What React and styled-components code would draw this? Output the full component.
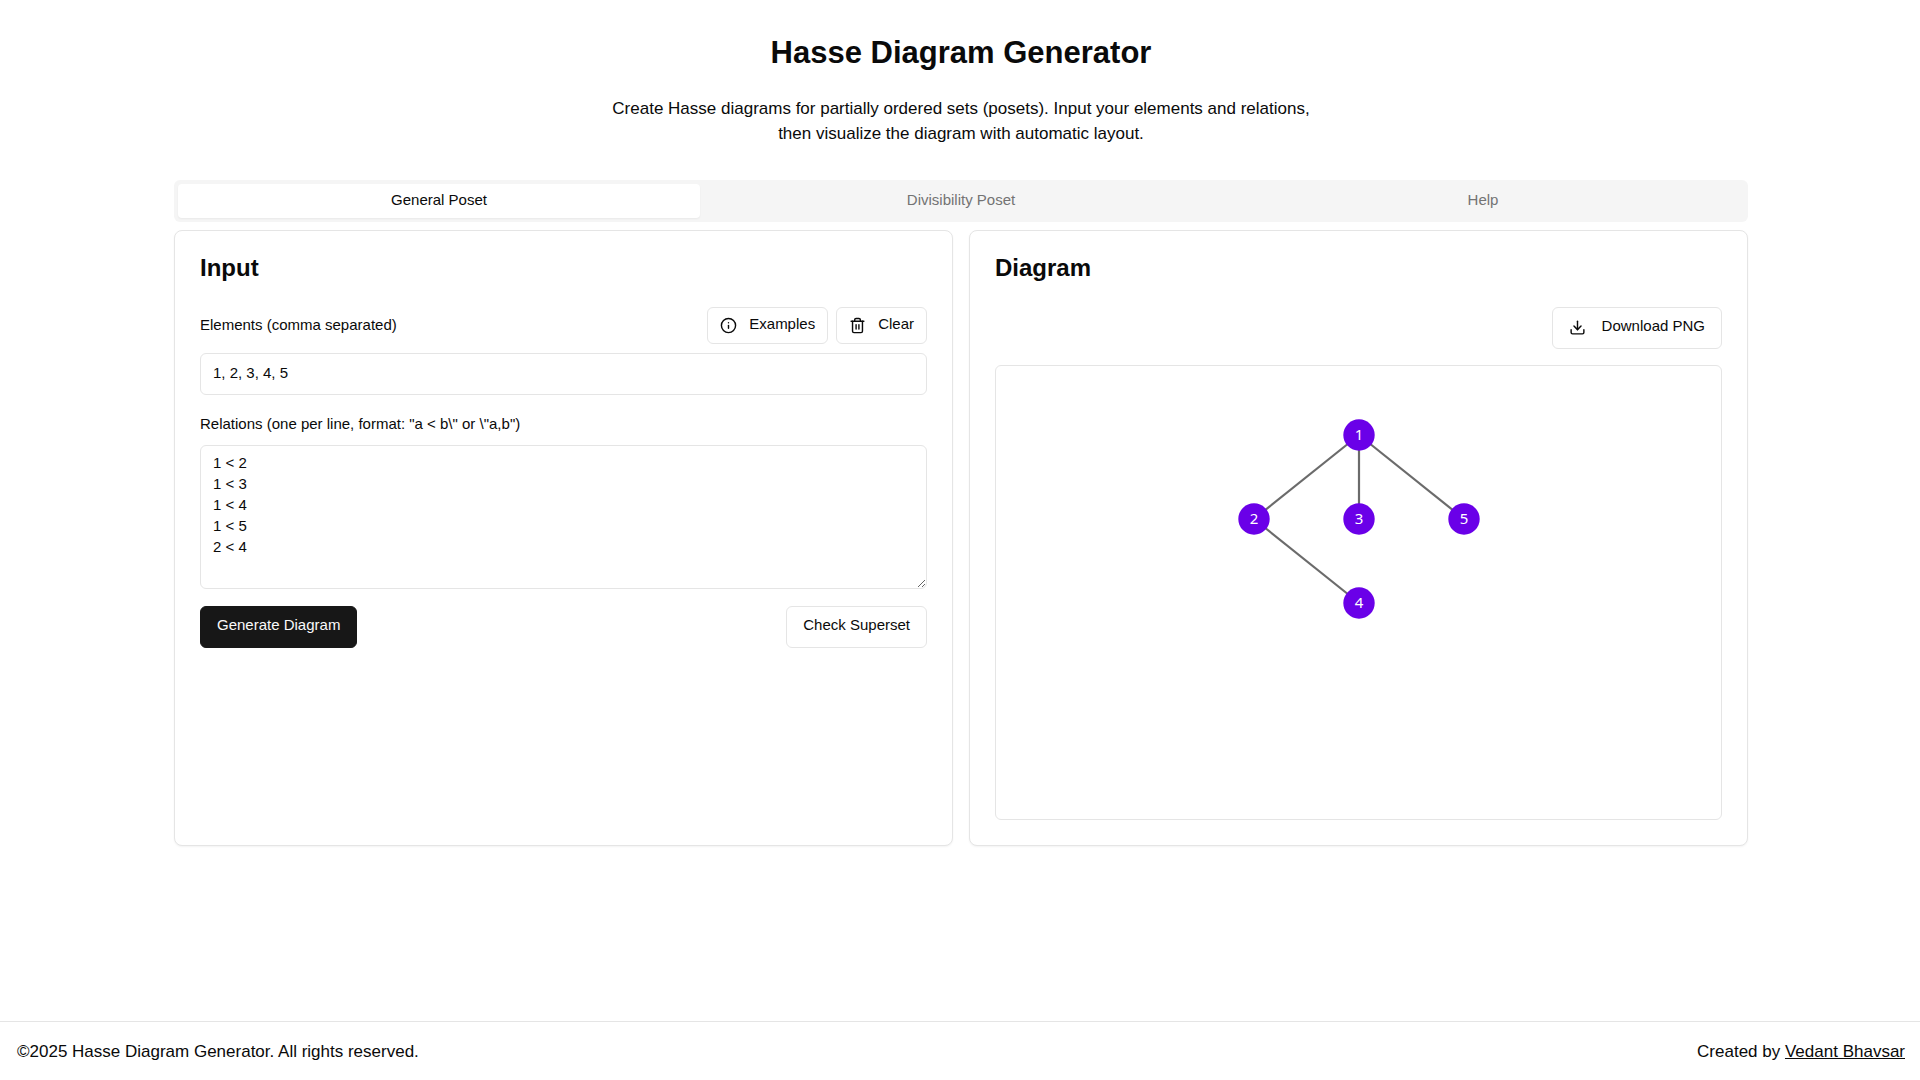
import React, { useState } from 'react';
import styled, { createGlobalStyle } from 'styled-components';
import { Download, Info, Trash2 } from 'lucide-react';

const tabs = ['General Poset', 'Divisibility Poset', 'Help'];

const nodes = [
  { id: '1', x: 363, y: 69 },
  { id: '2', x: 258, y: 153 },
  { id: '3', x: 363, y: 153 },
  { id: '5', x: 468, y: 153 },
  { id: '4', x: 363, y: 237 },
];

const edges = [
  ['1', '2'],
  ['1', '3'],
  ['1', '5'],
  ['2', '4'],
];

const findNode = (id) => nodes.find((node) => node.id === id);

const HasseDiagram = () => (
  <Canvas viewBox="0 0 725 453" role="img" aria-label="Hasse diagram">
    {edges.map(([from, to]) => {
      const a = findNode(from);
      const b = findNode(to);
      return <Edge key={from + to} x1={a.x} y1={a.y} x2={b.x} y2={b.y} />;
    })}
    {nodes.map(({ id, x, y }) => (
      <g key={id}>
        <Node cx={x} cy={y} r="15.7" />
        <NodeText x={x} y={y + 5}>
          {id}
        </NodeText>
      </g>
    ))}
  </Canvas>
);

const App = () => {
  const [activeTab, setActiveTab] = useState(tabs[0]);
  const [elements, setElements] = useState('1, 2, 3, 4, 5');
  const [relations, setRelations] = useState(
    '1 < 2\n1 < 3\n1 < 4\n1 < 5\n2 < 4'
  );

  const clear = () => {
    setElements('');
    setRelations('');
  };

  return (
    <Page>
      <GlobalStyle />
      <Main>
        <Title>Hasse Diagram Generator</Title>
        <Description>
          Create Hasse diagrams for partially ordered sets (posets). Input your
          elements and relations, then visualize the diagram with automatic
          layout.
        </Description>
        <TabList role="tablist">
          {tabs.map((tab) => (
            <Tab
              key={tab}
              type="button"
              role="tab"
              aria-selected={tab === activeTab}
              $active={tab === activeTab}
              onClick={() => setActiveTab(tab)}
            >
              {tab}
            </Tab>
          ))}
        </TabList>
        <Panels>
          <Card>
            <CardTitle>Input</CardTitle>
            <Fields>
              <Field>
                <FieldHeader>
                  <Label htmlFor="elements">Elements (comma separated)</Label>
                  <ButtonGroup>
                    <Button type="button" $small>
                      <Info size={17} />
                      Examples
                    </Button>
                    <Button type="button" $small onClick={clear}>
                      <Trash2 size={17} />
                      Clear
                    </Button>
                  </ButtonGroup>
                </FieldHeader>
                <TextInput
                  id="elements"
                  value={elements}
                  onChange={(e) => setElements(e.target.value)}
                />
              </Field>
              <Field>
                <Label htmlFor="relations">
                  {'Relations (one per line, format: "a < b\\" or \\"a,b")'}
                </Label>
                <TextArea
                  id="relations"
                  spellCheck={false}
                  value={relations}
                  onChange={(e) => setRelations(e.target.value)}
                />
              </Field>
              <Actions>
                <Button type="button" $primary>
                  Generate Diagram
                </Button>
                <Button type="button">Check Superset</Button>
              </Actions>
            </Fields>
          </Card>
          <Card>
            <CardTitle>Diagram</CardTitle>
            <DiagramSection>
              <DiagramActions>
                <Button type="button">
                  <Download size={17} />
                  Download PNG
                </Button>
              </DiagramActions>
              <DiagramFrame>
                <HasseDiagram />
              </DiagramFrame>
            </DiagramSection>
          </Card>
        </Panels>
      </Main>
      <Footer>
        <p>©2025 Hasse Diagram Generator. All rights reserved.</p>
        <p>
          Created by <FooterLink href="#author">Vedant Bhavsar</FooterLink>
        </p>
      </Footer>
    </Page>
  );
};

export default App;

// STYLED COMPONENTS
const GlobalStyle = createGlobalStyle`
  * {
    box-sizing: border-box;
  }

  body, h1, h2, p {
    margin: 0;
  }

  body, button, input, textarea {
    font-family: "Liberation Sans", Arial, sans-serif;
    color: #0a0a0a;
  }

  body {
    background: #ffffff;
    font-size: 17px;
    line-height: 25px;
  }
`;

const Page = styled.div`
  min-height: 100vh;
  display: flex;
  flex-direction: column;
`;

const Main = styled.main`
  flex: 1;
  width: 100%;
  max-width: 1608px;
  margin: 0 auto;
  padding: 34px 16px 34px 18px;
`;

const Title = styled.h1`
  margin-bottom: 25px;
  font-size: 31px;
  font-weight: 700;
  line-height: 37px;
  text-align: center;
`;

const Description = styled.p`
  max-width: 706px;
  margin: 0 auto 34px;
  text-align: center;
`;

const TabList = styled.div`
  display: grid;
  grid-template-columns: repeat(3, 1fr);
  margin-bottom: 8px;
  padding: 4px;
  border-radius: 6px;
  background: #f5f5f5;
`;

const Tab = styled.button`
  height: 34px;
  padding: 0 12px 4px;
  border: none;
  border-radius: 4px;
  background: ${({ $active }) => ($active ? '#ffffff' : 'transparent')};
  box-shadow: ${({ $active }) =>
    $active ? '0 1px 2px rgba(0, 0, 0, 0.05)' : 'none'};
  color: ${({ $active }) => ($active ? '#0a0a0a' : '#737373')};
  font-size: 15px;
  line-height: 21px;
  cursor: pointer;
`;

const Panels = styled.div`
  display: grid;
  grid-template-columns: repeat(2, 1fr);
  gap: 16px;
`;

const Card = styled.section`
  min-width: 0;
  padding: 25px;
  border: 1px solid #e5e5e5;
  border-radius: 8px;
  background: #ffffff;
  box-shadow: 0 1px 2px rgba(0, 0, 0, 0.05);
`;

const CardTitle = styled.h2`
  margin-bottom: 28px;
  font-size: 24px;
  font-weight: 700;
  line-height: 23px;
`;

const Fields = styled.div`
  display: grid;
  gap: 17px;
`;

const Field = styled.div`
  display: grid;
  gap: 8px;
`;

const FieldHeader = styled.div`
  display: flex;
  justify-content: space-between;
  align-items: center;
  padding-bottom: 1px;
`;

const ButtonGroup = styled.div`
  display: flex;
  gap: 8px;
`;

const Label = styled.label`
  padding-bottom: 2px;
  font-size: 15px;
  line-height: 23px;
`;

const Button = styled.button`
  display: inline-flex;
  align-items: center;
  gap: ${({ $small }) => ($small ? '12px' : '16px')};
  height: ${({ $small }) => ($small ? '37px' : '42px')};
  padding: ${({ $small }) => ($small ? '0 12px 4px' : '0 16px 5px')};
  border: 1px solid ${({ $primary }) => ($primary ? '#171717' : '#e5e5e5')};
  border-radius: 6px;
  background: ${({ $primary }) => ($primary ? '#171717' : '#ffffff')};
  color: ${({ $primary }) => ($primary ? '#fafafa' : '#0a0a0a')};
  font-size: 15px;
  line-height: 21px;
  white-space: nowrap;
  cursor: pointer;

  svg {
    margin-top: 3px;
  }
`;

const TextInput = styled.input`
  width: 100%;
  height: 42px;
  padding: 8px 12px 11px;
  border: 1px solid #e5e5e5;
  border-radius: 6px;
  background: #ffffff;
  font-size: 15px;
  line-height: 21px;
`;

const TextArea = styled.textarea`
  display: block;
  width: 100%;
  height: 144px;
  padding: 6px 12px;
  border: 1px solid #e5e5e5;
  border-radius: 6px;
  background: #ffffff;
  font-size: 15px;
  line-height: 21px;
  resize: vertical;
`;

const Actions = styled.div`
  display: flex;
  justify-content: space-between;
`;

const DiagramSection = styled.div`
  display: grid;
  gap: 16px;
`;

const DiagramActions = styled.div`
  display: flex;
  justify-content: flex-end;
`;

const DiagramFrame = styled.div`
  overflow: hidden;
  border: 1px solid #e5e5e5;
  border-radius: 6px;
`;

const Canvas = styled.svg`
  display: block;
  width: 100%;
`;

const Edge = styled.line`
  stroke: #6b6b6b;
  stroke-width: 2.2px;
`;

const Node = styled.circle`
  fill: #6a00e8;
`;

const NodeText = styled.text`
  fill: #ffffff;
  font-family: 'Noto Sans', sans-serif;
  font-size: 15px;
  text-anchor: middle;
`;

const Footer = styled.footer`
  display: flex;
  justify-content: space-between;
  padding: 17px 15px 16px 17px;
  border-top: 1px solid #e5e5e5;
`;

const FooterLink = styled.a`
  color: inherit;
  text-decoration: underline;
`;
